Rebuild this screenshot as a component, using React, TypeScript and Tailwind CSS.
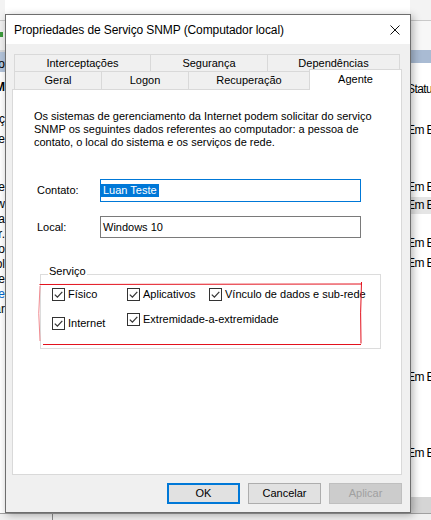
import React from 'react';

type CheckProps = { label: string; className?: string };

const Check = ({ label, className = '' }: CheckProps) => (
  <div className={`flex items-center gap-[3px] ${className}`}>
    <span className="flex h-[13px] w-[13px] shrink-0 items-center justify-center border border-[#333333] bg-white">
      <svg width="11" height="11" viewBox="0 0 11 11">
        <path d="M1.8 5.6 4.4 8.2 9.3 2.8" fill="none" stroke="#333333" strokeWidth="1.2" />
      </svg>
    </span>
    <span className="whitespace-nowrap leading-[13px]">{label}</span>
  </div>
);

const Edge = ({ text, className = '' }: { text: string; className?: string }) => (
  <div className={`flex h-[15px] justify-end overflow-hidden whitespace-nowrap leading-[15px] ${className}`}>
    {text}
  </div>
);

const Row = ({ className = '' }: { className?: string }) => (
  <div className={`h-[15px] whitespace-nowrap leading-[15px] ${className}`}>Em Execução</div>
);

const App = () => {
  return (
    <div className="relative h-[520px] w-[431px] overflow-hidden bg-[#f3f3f3] font-['Liberation_Sans',Arial,sans-serif] text-[12px] text-black">
      {/* services console behind the dialog */}
      <div className="flex h-[513px]">
        <div className="flex w-[5px] flex-col">
          <div className="h-[20px] bg-[#f3f3f3]" />
          <div className="h-px bg-[#c9c9c9]" />
          <div className="h-[29px] bg-[#f0f0f0] pt-[11px]">
            <div className="h-[5px] w-[3px] bg-[#3c9a3c]" />
          </div>
          <div className="h-[2px] bg-[#d8d8d8]" />
          <div className="flex h-[20px] flex-col justify-end bg-[#b3c4da]">
            <Edge text="Nome do serviço" />
          </div>
          <div className="flex flex-1 flex-col bg-white">
            <div className="mt-[8px]" />
            <Edge text="SNM" className="font-bold" />
            <div className="mt-[17px]" />
            <Edge text="Serviç" />
            <Edge text="Parar o se" className="mt-[5px]" />
            <div className="mt-[33px]" />
            <Edge text="dados de re" />
            <Edge text="w" className="mt-[2px]" />
            <Edge text="seja" />
            <Edge text="computador." />
            <Edge text="serviço" />
            <Edge text="protocol" />
            <Edge text="de" />
            <Edge text="le" className="text-[#0066cc]" />
            <Edge text="iniciar" />
          </div>
        </div>
        <div className="flex-1 bg-white" />
        <div className="flex w-[21px] flex-col">
          <div className="h-[20px] bg-[#f3f3f3]" />
          <div className="h-px bg-[#c9c9c9]" />
          <div className="h-[29px] bg-[#f7f7f7]" />
          <div className="h-[13px] bg-[#a9bbd3]" />
          <div className="-ml-[3px] flex flex-1 flex-col bg-white tracking-[-0.6px]">
            <div className="mt-[19px] h-[15px] whitespace-nowrap leading-[15px]">Status</div>
            <Row className="mt-[26px]" />
            <Row className="mt-[42px]" />
            <div className="mt-[2px] h-[17px] whitespace-nowrap bg-[#e5e5e5] leading-[17px]">Em Execução</div>
            <Row className="mt-[22px]" />
            <Row className="mt-[5px]" />
            <Row className="mt-[99px]" />
            <Row className="mt-[61px]" />
            <div className="flex-1" />
            <div className="h-[16px] bg-[#d5d5d5]" />
          </div>
        </div>
      </div>
      <div className="flex h-[7px] border-t border-[#a0a0a0] bg-[#f0f0f0]">
        <div className="w-[53px] border-r border-[#8a8a8a]" />
      </div>

      {/* dialog window */}
      <div className="absolute left-[5px] top-[14px] flex h-[499px] w-[406px] flex-col border border-[#6e6e6e] bg-[#f0f0f0] text-[11px] shadow-[2px_2px_8px_rgba(0,0,0,0.3)]">
        <div className="flex h-[29px] items-center justify-between bg-white pl-[8px] pr-[10px]">
          <span className="text-[12px] tracking-[-0.1px]">Propriedades de Serviço SNMP (Computador local)</span>
          <svg width="10" height="10" viewBox="0 0 10 10">
            <path d="M0.5 0.5 9.5 9.5 M9.5 0.5 0.5 9.5" stroke="#111111" strokeWidth="1" />
          </svg>
        </div>

        <div className="flex flex-col pl-[6px] pr-[8px] pt-[10px]">
          <div className="ml-[2px] flex h-[17px]">
            <div className="flex w-[136px] items-center justify-center border-l border-t border-[#d9d9d9]">Interceptações</div>
            <div className="flex w-[117px] items-center justify-center border-l border-t border-[#d9d9d9]">Segurança</div>
            <div className="flex w-[133px] items-center justify-center border-x border-t border-[#d9d9d9]">Dependências</div>
          </div>
          <div className="ml-[2px] flex h-[18px] items-end">
            <div className="flex h-[18px] w-[87px] items-center justify-center border-l border-t border-[#d9d9d9]">Geral</div>
            <div className="flex h-[18px] w-[87px] items-center justify-center border-l border-t border-[#d9d9d9]">Logon</div>
            <div className="flex h-[18px] w-[121px] items-center justify-center border-l border-t border-[#d9d9d9]">Recuperação</div>
            <div className="relative z-10 -mb-px flex h-[21px] w-[93px] items-center justify-center border-x border-t border-[#d9d9d9] bg-white pb-[1px]">Agente</div>
          </div>

          <div className="flex h-[386px] flex-col border border-[#d9d9d9] bg-white">
            <p className="pl-[21px] pt-[20px] leading-[13px]">
              <span className="block">Os sistemas de gerenciamento da Internet podem solicitar do serviço</span>
              <span className="block">SNMP os seguintes dados referentes ao computador: a pessoa de</span>
              <span className="block">contato, o local do sistema e os serviços de rede.</span>
            </p>

            <div className="mt-[30px] flex items-center pl-[24px]">
              <span className="w-[63px]">Contato:</span>
              <div className="flex h-[23px] w-[261px] items-center border border-[#0078d7] bg-white">
                <span className="bg-[#0078d7] px-[2px] leading-[13px] text-white">Luan Teste</span>
              </div>
            </div>
            <div className="mt-[14px] flex items-center pl-[24px]">
              <span className="w-[63px]">Local:</span>
              <div className="flex h-[22px] w-[261px] items-center border border-[#7a7a7a] bg-white pl-[2px]">
                Windows 10
              </div>
            </div>

            <div className="relative ml-[27px] mt-[36px] h-[75px] w-[341px] border border-[#dcdcdc] pl-[11px] pt-[13px]">
              <span className="absolute -top-[10px] left-[7px] bg-white px-px leading-[13px]">Serviço</span>
              <div className="grid grid-cols-[75px_82px_1fr] items-start gap-y-[12px]">
                <Check label="Físico" />
                <Check label="Aplicativos" />
                <Check label="Vínculo de dados e sub-rede" />
                <Check label="Internet" className="mt-[4px]" />
                <Check label="Extremidade-a-extremidade" />
              </div>
            </div>
          </div>

          <div className="mt-[8px] flex justify-end gap-[8px] pb-[8px]">
            <button className="h-[21px] w-[73px] border-2 border-[#0078d7] bg-[#e1e1e1]">OK</button>
            <button className="h-[21px] w-[73px] border border-[#adadad] bg-[#e1e1e1]">Cancelar</button>
            <button className="h-[21px] w-[73px] border border-[#bfbfbf] bg-[#cccccc] text-[#a0a0a0]">Aplicar</button>
          </div>
        </div>
      </div>

      {/* red hand-drawn marks */}
      <svg className="pointer-events-none absolute inset-0" width="431" height="520" viewBox="0 0 431 520">
        <path d="M334 88 Q356 88.6 377 87" fill="none" stroke="#e3111d" strokeWidth="1" />
        <path d="M39.5 284.5 L362 284" fill="none" stroke="#e3111d" strokeWidth="1" />
        <path d="M361.5 282 Q360 313 361 343.5" fill="none" stroke="#e3111d" strokeWidth="1" />
        <path d="M43 344.5 L361 344.5" fill="none" stroke="#e3111d" strokeWidth="1" />
        <path d="M40 286 Q37.5 313 40 341" fill="none" stroke="#f08a90" strokeWidth="1" />
      </svg>
    </div>
  );
};

export default App;
